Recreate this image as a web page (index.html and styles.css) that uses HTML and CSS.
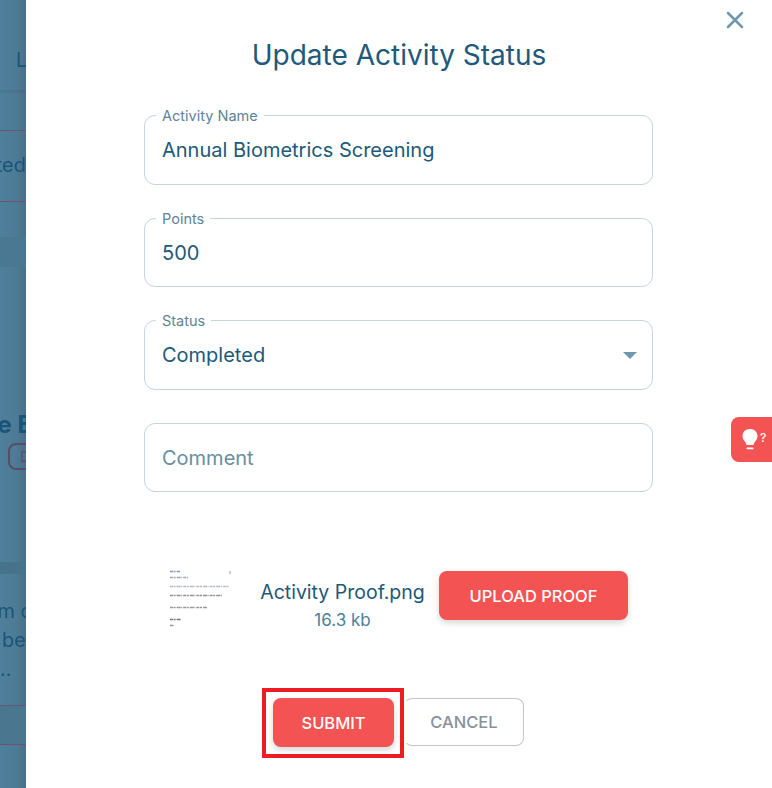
FILE: index.html
```html
<!DOCTYPE html>
<html lang="en">
<head>
    <meta charset="UTF-8">
    <title>Update Activity Status</title>
    <link rel="stylesheet" href="styles.css">
</head>
<body>
    <div class="page">
        <div class="backdrop">
            <div class="bg-nav"><span class="bg-nav-text">L</span></div>
            <div class="bg-gap"></div>
            <div class="bg-tab"><span class="bg-text">ted</span></div>
            <div class="bg-gap2"></div>
            <div class="bg-dark"></div>
            <div class="bg-plain"></div>
            <div class="bg-title">
                <span class="bg-text bg-bold bg-clip">e E</span>
                <span class="bg-tag">D</span>
            </div>
            <div class="bg-strip"></div>
            <div class="bg-desc">
                <span class="bg-text bg-clip">m c</span>
                <span class="bg-text">be</span>
                <span class="bg-dots">..</span>
            </div>
            <div class="bg-foot"></div>
        </div>

        <div class="modal">
            <button class="close" aria-label="Close">
                <svg width="20" height="20" viewBox="0 0 20 20">
                    <path d="M3 3 L17 17 M17 3 L3 17" stroke="#6f98ac" stroke-width="2.5" stroke-linecap="round" fill="none"/>
                </svg>
            </button>

            <h1 class="title">Update Activity Status</h1>

            <div class="form">
                <div class="field">
                    <span class="field-label">Activity Name</span>
                    <span class="field-value">Annual Biometrics Screening</span>
                </div>
                <div class="field field-short">
                    <span class="field-label">Points</span>
                    <span class="field-value">500</span>
                </div>
                <div class="field">
                    <span class="field-label">Status</span>
                    <span class="field-value">Completed</span>
                    <span class="caret"></span>
                </div>
                <div class="field field-short">
                    <span class="field-value placeholder">Comment</span>
                </div>
            </div>

            <div class="proof">
                <svg class="thumb" width="64" height="62" viewBox="0 0 64 62">
                    <g fill="none" stroke-width="1.4" stroke-dasharray="3 .6 2 1 4 .6 1 1">
                        <line x1="2" y1="3.5" x2="12" y2="3.5" stroke="#7f9ad0"/>
                        <line x1="2" y1="9.5" x2="20" y2="9.5" stroke="#a4a8ad"/>
                        <line x1="62" y1="3" x2="62" y2="6" stroke="#b4b8bc"/>
                        <line x1="2" y1="18.5" x2="61" y2="18.5" stroke="#b6bbc2"/>
                        <line x1="2" y1="27.5" x2="54" y2="27.5" stroke="#8f9398"/>
                        <line x1="2" y1="39.5" x2="39" y2="39.5" stroke="#94979c"/>
                        <line x1="2" y1="51.5" x2="13" y2="51.5" stroke="#74777c"/>
                        <line x1="2" y1="57.5" x2="6" y2="57.5" stroke="#94979c"/>
                    </g>
                </svg>
                <div class="file-info">
                    <div class="file-name">Activity Proof.png</div>
                    <div class="file-size">16.3 kb</div>
                </div>
                <button class="btn btn-red btn-upload">UPLOAD PROOF</button>
            </div>

            <div class="actions">
                <div class="highlight">
                    <button class="btn btn-red btn-submit">SUBMIT</button>
                </div>
                <button class="btn btn-cancel">CANCEL</button>
            </div>
        </div>

        <div class="help-tab">
            <svg width="18" height="24" viewBox="0 0 18 24">
                <path d="M9 1 C4.3 1 1.5 4.3 1.5 8 C1.5 11 3.2 12.6 4.5 14.4 C5.2 15.4 5.3 16.2 5.4 17 L12.6 17 C12.7 16.2 12.8 15.4 13.5 14.4 C14.8 12.6 16.5 11 16.5 8 C16.5 4.3 13.7 1 9 1 Z" fill="#fff"/>
                <rect x="5.5" y="19.5" width="7" height="1.8" rx=".6" fill="#fff"/>
            </svg>
            <span class="help-mark">?</span>
        </div>
    </div>
</body>
</html>
```

FILE: styles.css
```css
* {
    box-sizing: border-box;
}
body {
    margin: 0;
    font-family: Inter, Roboto, sans-serif;
    background: #fff;
}
.page {
    display: flex;
    position: relative;
    height: 788px;
    overflow: hidden;
}

/* dimmed page behind the drawer */
.backdrop {
    width: 26px;
    flex: none;
    overflow: hidden;
    background: linear-gradient(90deg, #4f7f9a 0%, #4d7b96 60%, #4c6f88 100%);
    color: #1a5577;
    font-size: 20px;
    filter: blur(.5px);
}
.bg-text {
    display: flex;
    justify-content: flex-end;
    white-space: nowrap;
    line-height: 29px;
}
.bg-clip {
    margin-right: -6px;
}
.bg-nav {
    height: 90px;
    padding: 48px 0 0 16px;
    line-height: 24px;
    box-shadow: 0 1px 3px rgba(0,0,0,.12);
}
.bg-gap {
    height: 41px;
    border-bottom: 1px solid #6a5570;
}
.bg-tab {
    height: 71px;
    padding-top: 20px;
    border-bottom: 1px solid #6a5570;
}
.bg-gap2 {
    height: 35px;
}
.bg-dark {
    height: 30px;
    background: #4a7791;
}
.bg-plain {
    height: 143px;
}
.bg-title {
    height: 152px;
    padding-top: 0;
}
.bg-bold {
    font-weight: 700;
    font-size: 24px;
    line-height: 30px;
}
.bg-tag {
    display: block;
    width: 40px;
    height: 27px;
    margin: 3px 0 0 8px;
    padding-left: 10px;
    border: 2px solid #5b4a68;
    border-radius: 8px;
    color: #5b4a68;
    font-size: 14px;
    line-height: 23px;
}
.bg-strip {
    height: 12px;
    background: #47728c;
}
.bg-desc {
    height: 132px;
    padding-top: 23px;
    border-bottom: 1px solid #6a5570;
}
.bg-dots {
    display: block;
    line-height: 29px;
}
.bg-foot {
    height: 39px;
    border-bottom: 1px solid #6a5570;
    background: #4b7690;
}

.modal {
    flex: 1;
    position: relative;
    background: #fff;
    padding-top: 36px;
}
.close {
    position: absolute;
    top: 10px;
    right: 27px;
    width: 20px;
    height: 20px;
    padding: 0;
    border: 0;
    background: none;
}
.title {
    margin: 0;
    text-align: center;
    font-size: 28px;
    font-weight: 400;
    line-height: 38px;
    color: #20597a;
}

.form {
    width: 509px;
    margin: 41px 0 0 118px;
    display: flex;
    flex-direction: column;
    gap: 33px;
}
.field {
    position: relative;
    height: 70px;
    display: flex;
    align-items: center;
    padding: 0 17px;
    border: 1px solid #c5d5e0;
    border-radius: 11px;
}
.field-short {
    height: 69px;
}
.field-label {
    position: absolute;
    top: -9px;
    left: 11px;
    padding: 0 6px;
    background: #fff;
    color: #5d8499;
    font-size: 14.5px;
    line-height: 17px;
}
.field-value {
    font-size: 20px;
    color: #20597a;
}
.placeholder {
    color: #6a8ea2;
}
.caret {
    position: absolute;
    right: 15px;
    top: 31px;
    border-style: solid;
    border-width: 7px 7px 0;
    border-color: #6f98ac transparent transparent;
}

.proof {
    display: flex;
    align-items: flex-start;
    margin: 79px 0 0 142px;
    height: 49px;
}
.thumb {
    flex: none;
    margin-top: -3px;
}
.file-info {
    width: 171px;
    margin: 7px 11px 0 25px;
    text-align: center;
    flex: none;
    white-space: nowrap;
}
.file-name {
    font-size: 19.5px;
    line-height: 28px;
    color: #20597a;
}
.file-size {
    font-size: 17px;
    line-height: 28px;
    color: #4c7f9c;
}

.btn {
    font-family: inherit;
    font-weight: 500;
    border-radius: 8px;
    cursor: pointer;
}
.btn-red {
    border: 0;
    background: #f35353;
    color: #fff;
    box-shadow: 0 3px 6px rgba(0,0,0,.16);
}
.btn-upload {
    width: 189px;
    height: 49px;
    font-size: 16.5px;
}
.actions {
    display: flex;
    align-items: flex-start;
    margin: 68px 0 0 236px;
}
.highlight {
    padding: 6px 6px 7px 7px;
    border: 4px solid #ed1c24;
}
.btn-submit {
    display: block;
    width: 121px;
    height: 49px;
    font-size: 16.5px;
}
.btn-cancel {
    width: 120px;
    height: 48px;
    margin-top: 10px;
    background: #fff;
    border: 1px solid #c4c4c4;
    border-left-color: transparent;
    color: #8b8f96;
    font-size: 16.5px;
}

.help-tab {
    position: absolute;
    top: 417px;
    right: 0;
    width: 41px;
    height: 45px;
    display: flex;
    align-items: center;
    padding-left: 10px;
    background: #f35353;
    border-radius: 8px 0 0 8px;
}
.help-mark {
    color: #fff;
    font-size: 12px;
    font-weight: 500;
    margin: -4px 0 0 1px;
}
```
